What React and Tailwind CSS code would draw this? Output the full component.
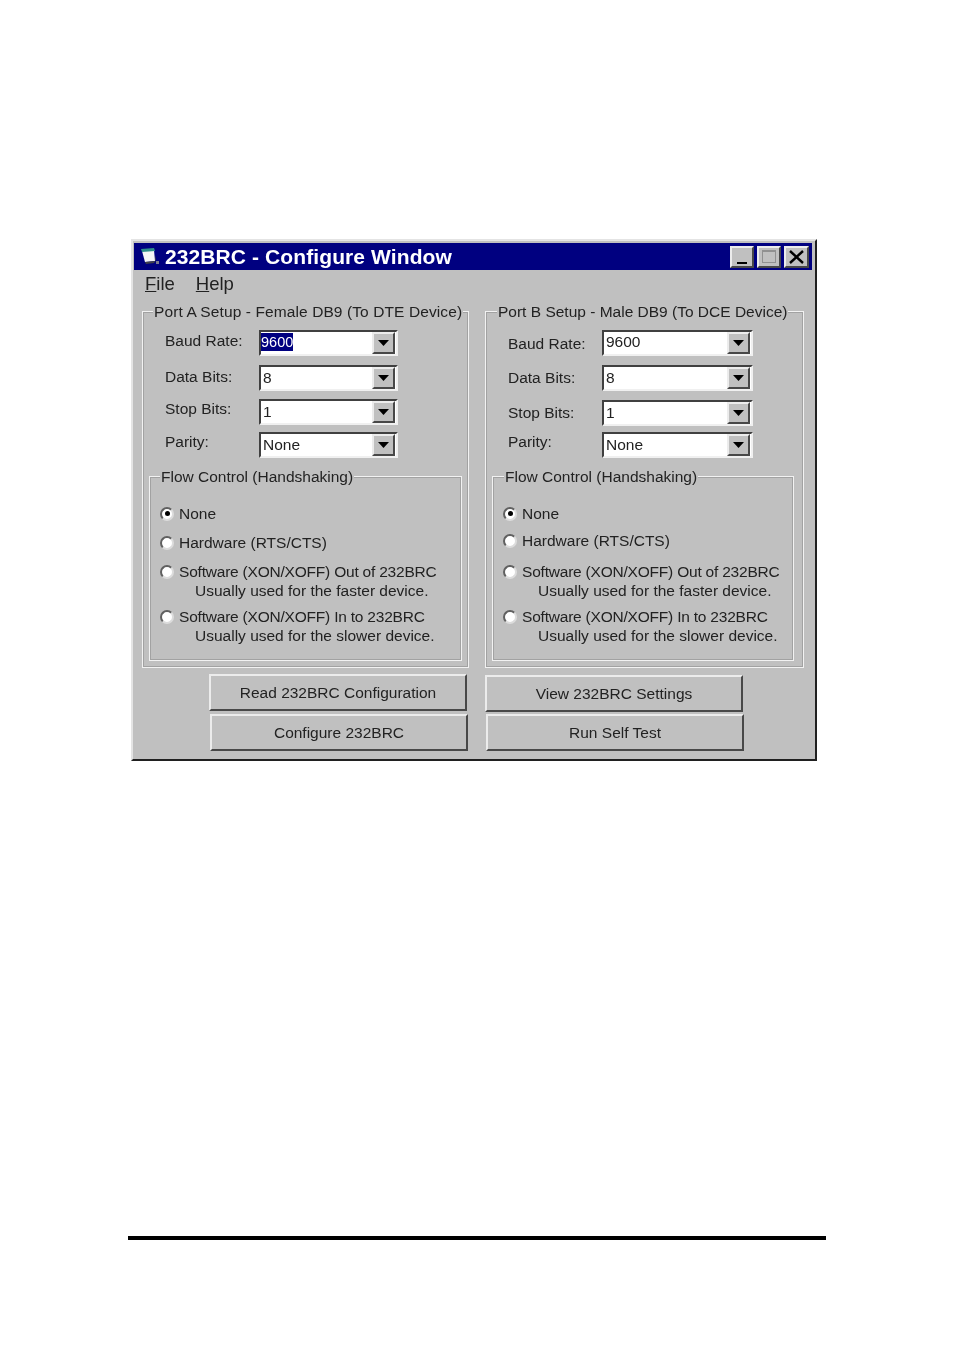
import React from "react";

const FONT = "[font-family:'Liberation_Sans',Arial,sans-serif]";

const portA = {
  title: "Port A Setup - Female DB9 (To DTE Device)",
  titleClass: "left-[10px] tracking-[0.1px]",
  width: "w-[327px]",
  flowWidth: "w-[313px]",
  flowLegend: "left-[10px]",
  comboWidth: "w-[139px]",
  hardwareGap: "mt-[10px]",
  softwareGap: "mt-[10px]",
  selected: true,
  rows: [
    { label: "Baud Rate:", value: "9600", gap: "mt-[18px]", nudge: "-translate-y-[3px]" },
    { label: "Data Bits:", value: "8", gap: "mt-[9px]", nudge: "-translate-y-[2px]" },
    { label: "Stop Bits:", value: "1", gap: "mt-[8px]", nudge: "-translate-y-[4px]" },
    { label: "Parity:", value: "None", gap: "mt-[7px]", nudge: "-translate-y-[4px]" },
  ],
};

const portB = {
  title: "Port B Setup - Male DB9 (To DCE Device)",
  titleClass: "left-[11px]",
  width: "w-[319px]",
  flowWidth: "w-[302px]",
  flowLegend: "left-[11px]",
  comboWidth: "w-[151px]",
  hardwareGap: "mt-[8px]",
  softwareGap: "mt-[12px]",
  selected: false,
  rows: [
    { label: "Baud Rate:", value: "9600", gap: "mt-[18px]", nudge: "translate-y-0" },
    { label: "Data Bits:", value: "8", gap: "mt-[9px]", nudge: "-translate-y-[1px]" },
    { label: "Stop Bits:", value: "1", gap: "mt-[9px]", nudge: "-translate-y-[1px]" },
    { label: "Parity:", value: "None", gap: "mt-[6px]", nudge: "-translate-y-[4px]" },
  ],
};

const Raised = ({ className, children }) => (
  <div
    className={`flex items-center justify-center bg-[#c0c0c0] border-2 border-t-[#ececec] border-l-[#ececec] border-r-[#484848] border-b-[#484848] ${className}`}
  >
    {children}
  </div>
);

const TitleIcon = () => (
  <svg width="18" height="17" viewBox="0 0 18 17">
    <path d="M1 3 L13 2 L14 13 L4 14 Z" fill="#f6f6f6" />
    <path d="M0 1 L13 0 L14 3 L1 4 Z" fill="#2f8f8a" />
    <path d="M4 14 L14 13 L14 7 L15 12 L13 15 L5 16 Z" fill="#404048" />
    <rect x="15" y="13" width="3" height="3" fill="#7a7a90" />
  </svg>
);

const Combo = ({ value, width, selected }) => (
  <div
    className={`relative h-[26px] ${width} bg-white border-2 border-t-[#404040] border-l-[#404040] border-r-[#f0f0f0] border-b-[#f0f0f0] flex items-center`}
  >
    {selected ? (
      <span className="bg-[#000080] text-white h-[18px] leading-[18px] text-[14.5px] -translate-y-[1px]">
        {value}
      </span>
    ) : (
      <span className={`text-[15.5px] leading-[18px] pl-[2px] ${value === "9600" ? "-translate-y-[1px] text-[14.5px]" : ""}`}>
        {value}
      </span>
    )}
    <Raised className="absolute right-[1px] top-0 w-[23px] h-[22px]">
      <svg width="11" height="6" viewBox="0 0 11 6">
        <path d="M0 0 H11 L5.5 6 Z" fill="#000" />
      </svg>
    </Raised>
  </div>
);

const Radio = ({ checked }) => (
  <span className="w-[14px] h-[14px] shrink-0 rounded-full bg-white border-2 border-t-[#606060] border-l-[#606060] border-r-[#dcdcdc] border-b-[#dcdcdc] flex items-center justify-center">
    {checked && <span className="w-[5px] h-[5px] rounded-full bg-black" />}
  </span>
);

const RadioRow = ({ checked, children, sub, className }) => (
  <div className={className}>
    <div className="flex items-center h-[19px] pl-[10px]">
      <Radio checked={checked} />
      <span className={`ml-[5px] whitespace-nowrap ${sub ? "tracking-[-0.21px]" : ""}`}>{children}</span>
    </div>
    {sub && <div className="h-[19px] leading-[19px] pl-[45px] whitespace-nowrap">{sub}</div>}
  </div>
);

const GroupBox = ({ title, className, legend, children }) => (
  <div className={`relative border border-[#f2f2f2] shadow-[inset_0_0_0_1px_#a2a2a2] ${className}`}>
    <span className={`absolute top-[-10px] ${legend} bg-[#c0c0c0] px-[1px] h-[19px] leading-[19px] whitespace-nowrap`}>
      {title}
    </span>
    {children}
  </div>
);

const Port = ({ port }) => (
  <GroupBox title={port.title} legend={port.titleClass} className={`${port.width} h-[357px] pl-[6px]`}>
    {port.rows.map((row) => (
      <div key={row.label} className={`flex items-center ${row.gap}`}>
        <span className={`w-[94px] pl-[16px] whitespace-nowrap h-[19px] leading-[19px] ${row.nudge}`}>
          {row.label}
        </span>
        <div className="ml-[16px]">
          <Combo value={row.value} width={port.comboWidth} selected={port.selected && row.label === "Baud Rate:"} />
        </div>
      </div>
    ))}
    <GroupBox title="Flow Control (Handshaking)" legend={port.flowLegend} className={`${port.flowWidth} h-[185px] mt-[18px] pt-[27px]`}>
      <RadioRow checked>None</RadioRow>
      <RadioRow className={port.hardwareGap}>Hardware (RTS/CTS)</RadioRow>
      <RadioRow className={port.softwareGap} sub="Usually used for the faster device.">
        Software (XON/XOFF) Out of 232BRC
      </RadioRow>
      <RadioRow className="mt-[7px]" sub="Usually used for the slower device.">
        Software (XON/XOFF) In to 232BRC
      </RadioRow>
    </GroupBox>
  </GroupBox>
);

const PushButton = ({ children, className }) => (
  <Raised className={`w-[258px] h-[37px] ${className}`}>{children}</Raised>
);

export default function App() {
  return (
    <div className={`${FONT} bg-white w-[953px] h-[1352px] overflow-hidden pt-[239px] text-[15.5px] text-[#222]`}>
      <div className="ml-[131px] w-[686px] h-[522px] bg-[#c0c0c0] border-2 border-t-[#e4e4e4] border-l-[#e4e4e4] border-r-[#202020] border-b-[#202020] pt-[2px] pl-[1px] pr-[3px] blur-[0.4px]">
        <div className="h-[27px] bg-[#000080] flex items-center pl-[7px] pr-[3px]">
          <TitleIcon />
          <span className="ml-[6px] text-white font-bold text-[21px] tracking-[0.1px] whitespace-nowrap">232BRC - Configure Window</span>
          <div className="ml-auto flex items-center gap-[3px]">
            <Raised className="w-[24px] h-[22px] items-end pb-[2px]">
              <span className="w-[10px] h-[2px] bg-black" />
            </Raised>
            <Raised className="w-[24px] h-[22px]">
              <span className="w-[14px] h-[13px] border border-[#909090] border-t-2" />
            </Raised>
            <Raised className="w-[25px] h-[22px]">
              <svg width="15" height="14" viewBox="0 0 15 14">
                <path d="M1 1 L14 13 M14 1 L1 13" stroke="#000" strokeWidth="2.4" />
              </svg>
            </Raised>
          </div>
        </div>
        <div className="h-[41px] pl-[11px] pt-[3px] flex gap-[21px] text-[18.5px] leading-[22px]">
          <span><span className="underline">F</span>ile</span>
          <span><span className="underline">H</span>elp</span>
        </div>
        <div className="flex pl-[8px] gap-[16px]">
          <Port port={portA} />
          <Port port={portB} />
        </div>
        <div className="flex pl-[75px] pt-[6px]">
          <div className="w-[276px]">
            <PushButton>Read 232BRC Configuration</PushButton>
            <PushButton className="ml-[1px] mt-[3px]">Configure 232BRC</PushButton>
          </div>
          <div className="pt-[1px]">
            <PushButton>View 232BRC Settings</PushButton>
            <PushButton className="ml-[1px] mt-[2px]">Run Self Test</PushButton>
          </div>
        </div>
      </div>
      <div className="ml-[128px] mt-[475px] w-[698px] h-[4px] bg-black" />
    </div>
  );
}
